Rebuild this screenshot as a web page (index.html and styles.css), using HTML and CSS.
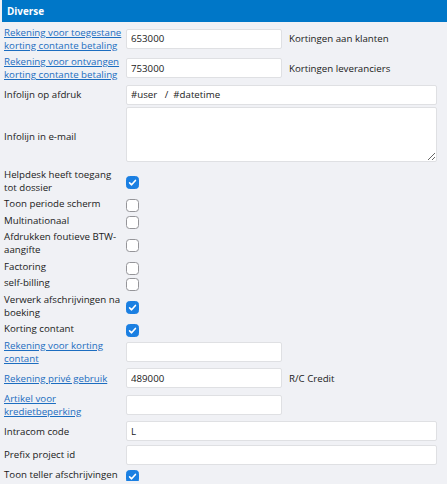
FILE: index.html
```html
<!DOCTYPE html>
<html lang="nl">
<head>
<meta charset="utf-8">
<link rel="stylesheet" href="styles.css">
</head>
<body>
<div class="panel">
  <div class="panel-head">Diverse</div>
  <div class="form">
    <a class="lbl link" href="#">Rekening voor toegestane korting contante betaling</a>
    <div class="ctl"><input class="inp narrow" type="text" value="653000"><span class="note">Kortingen aan klanten</span></div>

    <a class="lbl link" href="#">Rekening voor ontvangen korting contante betaling</a>
    <div class="ctl"><input class="inp narrow" type="text" value="753000"><span class="note">Kortingen leveranciers</span></div>

    <span class="lbl">Infolijn op afdruk</span>
    <div class="ctl"><input class="inp wide" type="text" value="#user   /  #datetime"></div>

    <span class="lbl">Infolijn in e-mail</span>
    <div class="ctl"><textarea class="inp wide area"></textarea></div>

    <span class="lbl">Helpdesk heeft toegang tot dossier</span>
    <div class="ctl"><span class="cb on"><svg viewBox="0 0 13 13"><path d="M3.6 6.9 5.6 8.8 9.4 4.4"/></svg></span></div>

    <span class="lbl one">Toon periode scherm</span>
    <div class="ctl"><span class="cb"></span></div>

    <span class="lbl one">Multinationaal</span>
    <div class="ctl"><span class="cb"></span></div>

    <span class="lbl">Afdrukken foutieve BTW-aangifte</span>
    <div class="ctl"><span class="cb"></span></div>

    <span class="lbl one">Factoring</span>
    <div class="ctl"><span class="cb"></span></div>

    <span class="lbl one">self-billing</span>
    <div class="ctl"><span class="cb"></span></div>

    <span class="lbl">Verwerk afschrijvingen na boeking</span>
    <div class="ctl"><span class="cb on"><svg viewBox="0 0 13 13"><path d="M3.6 6.9 5.6 8.8 9.4 4.4"/></svg></span></div>

    <span class="lbl one">Korting contant</span>
    <div class="ctl"><span class="cb on"><svg viewBox="0 0 13 13"><path d="M3.6 6.9 5.6 8.8 9.4 4.4"/></svg></span></div>

    <a class="lbl link" href="#">Rekening voor korting contant</a>
    <div class="ctl"><input class="inp narrow" type="text" value=""></div>

    <a class="lbl link" href="#">Rekening privé gebruik</a>
    <div class="ctl"><input class="inp narrow" type="text" value="489000"><span class="note">R/C Credit</span></div>

    <a class="lbl link" href="#">Artikel voor kredietbeperking</a>
    <div class="ctl"><input class="inp narrow" type="text" value=""></div>

    <span class="lbl">Intracom code</span>
    <div class="ctl"><input class="inp wide" type="text" value="L"></div>

    <span class="lbl">Prefix project id</span>
    <div class="ctl"><input class="inp wide" type="text" value=""></div>

    <span class="lbl one">Toon teller afschrijvingen</span>
    <div class="ctl"><span class="cb on"><svg viewBox="0 0 13 13"><path d="M3.6 6.9 5.6 8.8 9.4 4.4"/></svg></span></div>
  </div>
</div>
</body>
</html>
```

FILE: styles.css
```css
html, body {
  margin: 0;
  padding: 0;
  background: #f0f1f5;
}

body {
  font-family: "Open Sans", "Liberation Sans", sans-serif;
  font-size: 9.7px;
  line-height: 13px;
  color: #1a1a1a;
  overflow: hidden;
}

.panel {
  padding-left: 2px;
}

.panel-head {
  height: 22px;
  background: #0077c8;
  color: #fff;
  font-weight: 700;
  font-size: 9.9px;
  line-height: 22px;
  padding-left: 5px;
}

.form {
  display: grid;
  grid-template-columns: 120px 311px;
  column-gap: 2px;
  row-gap: 3.5px;
  align-items: center;
  padding: 3.5px 0 0 2px;
}

.lbl {
  display: block;
}

.lbl.one {
  min-height: 13px;
}

.link {
  color: #1c6dc0;
  text-decoration: underline;
  text-underline-offset: 1px;
}

.ctl {
  display: flex;
  align-items: center;
  gap: 7px;
  min-height: 13px;
}

.inp {
  box-sizing: border-box;
  height: 20px;
  margin: 0;
  border: 1px solid #dfe0e3;
  border-radius: 2px;
  background: #fff;
  font-family: "Open Sans", "Liberation Sans", sans-serif;
  font-size: 9.7px;
  color: #1a1a1a;
  padding: 0 4px;
  outline: none;
}

.narrow {
  width: 156px;
}

.wide {
  width: 311px;
}

.area {
  height: 55px;
  resize: both;
  display: block;
  margin: -1px 0 2px;
}

.note {
  color: #1a1a1a;
}

.cb {
  box-sizing: border-box;
  width: 13px;
  height: 13px;
  border-radius: 3.5px;
  border: 1px solid #959599;
  background: #fff;
  margin: 2px 0 -2px;
  display: flex;
}

.cb.on {
  background: #1a7fe2;
  border-color: #1a7fe2;
}

.cb svg {
  width: 13px;
  height: 13px;
  margin: -1px;
  fill: none;
  stroke: #fff;
  stroke-width: 1.6;
  stroke-linecap: round;
  stroke-linejoin: round;
}
```
